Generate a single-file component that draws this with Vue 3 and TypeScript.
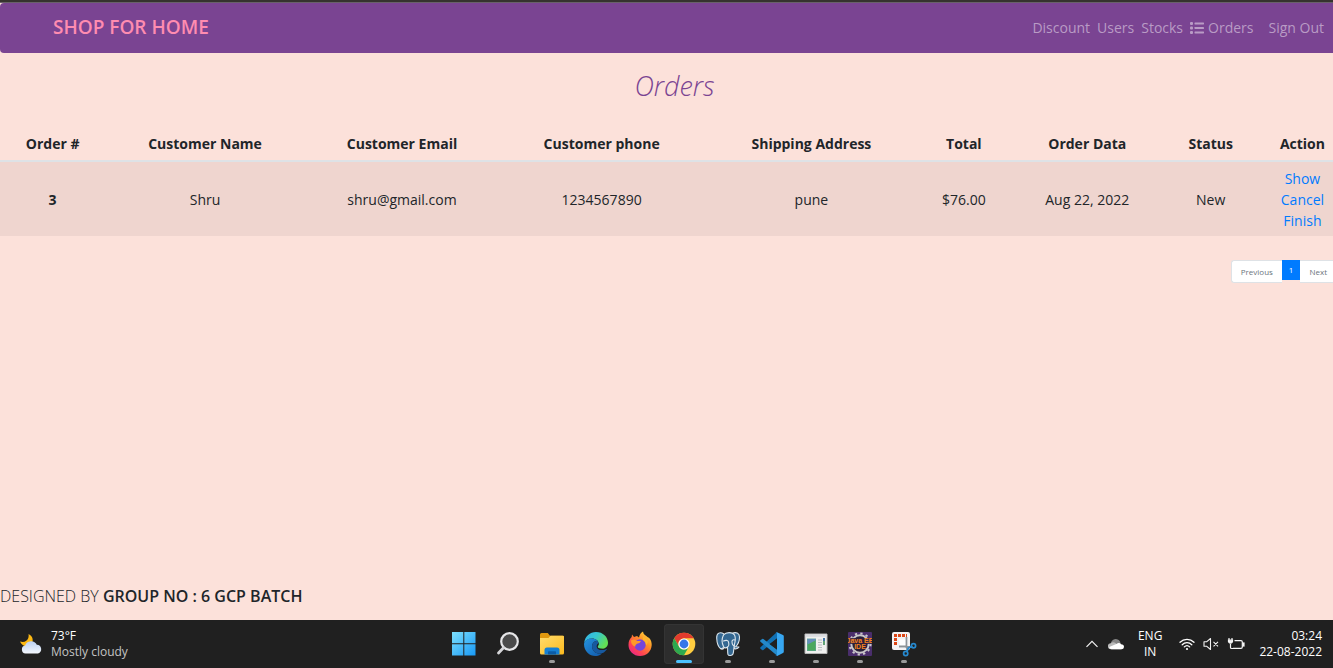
<script setup lang="ts">
interface Order {
  id: number
  name: string
  email: string
  phone: string
  address: string
  total: string
  date: string
  status: string
}

const headings: string[] = [
  'Order #',
  'Customer Name',
  'Customer Email',
  'Customer phone',
  'Shipping Address',
  'Total',
  'Order Data',
  'Status',
  'Action',
]

const actions: string[] = ['Show', 'Cancel', 'Finish']

const orders: Order[] = [
  {
    id: 3,
    name: 'Shru',
    email: 'shru@gmail.com',
    phone: '1234567890',
    address: 'pune',
    total: '$76.00',
    date: 'Aug 22, 2022',
    status: 'New',
  },
]
</script>

<template>
  <div class="screen">
    <div class="browser-edge"></div>
    <div class="page">
      <div class="wide">
        <nav class="navbar">
          <a class="brand" href="#">SHOP FOR HOME</a>
          <div class="links">
            <a href="#">Discount</a>
            <a href="#">Users</a>
            <a href="#">Stocks</a>
            <a href="#" class="with-icon">
              <svg width="14" height="12" viewBox="0 0 14 12" fill="currentColor" aria-hidden="true">
                <rect x="0" y="0" width="3" height="3" rx="1" />
                <rect x="0" y="4.5" width="3" height="3" rx="1" />
                <rect x="0" y="9" width="3" height="3" rx="1" />
                <rect x="4.5" y="0.5" width="9.5" height="2" rx=".4" />
                <rect x="4.5" y="5" width="9.5" height="2" rx=".4" />
                <rect x="4.5" y="9.5" width="9.5" height="2" rx=".4" />
              </svg>
              Orders
            </a>
            <a href="#" class="sign-out">Sign Out</a>
          </div>
        </nav>
      </div>

      <div class="wide">
        <h1 class="title">Orders</h1>
        <table class="orders">
          <colgroup>
            <col class="c-id" />
            <col class="c-name" />
            <col class="c-email" />
            <col class="c-phone" />
            <col class="c-address" />
            <col class="c-total" />
            <col class="c-date" />
            <col class="c-status" />
            <col class="c-action" />
          </colgroup>
          <thead>
            <tr>
              <th v-for="heading in headings" :key="heading" scope="col">{{ heading }}</th>
            </tr>
          </thead>
          <tbody>
            <tr v-for="order in orders" :key="order.id">
              <th scope="row">{{ order.id }}</th>
              <td>{{ order.name }}</td>
              <td>{{ order.email }}</td>
              <td>{{ order.phone }}</td>
              <td>{{ order.address }}</td>
              <td>{{ order.total }}</td>
              <td>{{ order.date }}</td>
              <td>{{ order.status }}</td>
              <td>
                <a v-for="action in actions" :key="action" class="action" href="#">{{ action }}</a>
              </td>
            </tr>
          </tbody>
        </table>

        <div class="pagination">
          <button type="button" class="step first">Previous</button>
          <button type="button" class="current">1</button>
          <button type="button" class="step last">Next</button>
        </div>
      </div>

      <footer class="credit">DESIGNED BY <b>GROUP NO : 6 GCP BATCH</b></footer>
    </div>

    <div class="taskbar">
      <button type="button" class="weather">
        <svg width="24" height="22" viewBox="0 0 24 22" aria-hidden="true">
          <defs>
            <linearGradient id="cloud" x1="0" y1="0" x2="0" y2="1">
              <stop offset="0" stop-color="#b9cff2" />
              <stop offset="1" stop-color="#f3f7fd" />
            </linearGradient>
          </defs>
          <path d="M9.500 1c4.500 2 5.500 7 2.500 10.500C8.500 14.500 3 13.500 1 8.500c4 1.300 7.500-.500 8.300-3.500.4-1.500.5-2.500.2-4z" fill="#fcb813" />
          <path d="M6.500 20.500a4 4 0 0 1-.4-7.900A6.300 6.300 0 0 1 17.800 11.700a4.500 4.500 0 0 1 1.200 8.800z" fill="url(#cloud)" />
        </svg>
        <span class="weather-text">
          <span class="bright">73°F</span>
          <span class="dim">Mostly cloudy</span>
        </span>
      </button>

      <div class="apps">
        <button type="button" class="app" aria-label="Start">
          <svg width="24" height="24" viewBox="0 0 24 24">
            <defs>
              <linearGradient id="win" x1="0" y1="0" x2="1" y2="1">
                <stop offset="0" stop-color="#7de0fd" />
                <stop offset="1" stop-color="#1798f5" />
              </linearGradient>
            </defs>
            <path d="M0 0h11.300v11.300H0zM12.300 0H23.500v11.300H12.300zM0 12.300h11.300v11.200H0zM12.300 12.300h11.200v11.200H12.300z" fill="url(#win)" />
          </svg>
        </button>
        <button type="button" class="app" aria-label="Search">
          <svg width="24" height="24" viewBox="0 0 24 24">
            <circle cx="13.500" cy="9.500" r="8.300" fill="#4b4b4b" stroke="#e7e7e9" stroke-width="2.200" />
            <path d="M7.500 15.800 2.500 21" stroke="#d5d5d8" stroke-width="2.800" stroke-linecap="round" />
          </svg>
        </button>
        <button type="button" class="app running" aria-label="File Explorer">
          <svg width="26" height="24" viewBox="0 0 26 24">
            <defs>
              <linearGradient id="folder" x1="0" y1="0" x2="1" y2="1">
                <stop offset="0" stop-color="#ffdc6e" />
                <stop offset="1" stop-color="#fcba1d" />
              </linearGradient>
            </defs>
            <path d="M1 2.500Q1 1 2.500 1h6.300l2.200 2.700H23.500Q25 3.700 25 5v5H1z" fill="#e0980e" />
            <path d="M1 6h8.500l2-2.200H24q1 0 1 1V21q0 1.500-1.500 1.500h-21Q1 22.500 1 21z" fill="url(#folder)" />
            <path d="M5.500 22.500V18q0-2.500 2.500-2.500h10q2.500 0 2.500 2.500v4.500z" fill="#1580d4" />
            <path d="M9 20q0-.8.800-.8h6.400q.8 0 .8.800v2.500H9z" fill="#0b5ca7" />
          </svg>
        </button>
        <button type="button" class="app" aria-label="Edge">
          <svg width="26" height="26" viewBox="0 0 26 26">
            <defs>
              <linearGradient id="edge-a" x1="0" y1="0" x2="1" y2=".5">
                <stop offset="0" stop-color="#35b2ed" />
                <stop offset=".5" stop-color="#36c6cf" />
                <stop offset="1" stop-color="#63df54" />
              </linearGradient>
              <linearGradient id="edge-b" x1="0" y1="0" x2="1" y2="1">
                <stop offset="0" stop-color="#2493df" />
                <stop offset="1" stop-color="#1258a9" />
              </linearGradient>
            </defs>
            <path d="M1.200 12C2 5 7 1 13 1c7 0 12 5 12 10.800 0 4-3 6-6.300 6-2.700 0-4.200-.9-4.200-1.800 0-.7 1.200-1.200 1.200-3.200 0-3-2.900-5.300-6.700-5.300-3.600 0-6.500 1.700-7.800 4.500z" fill="url(#edge-a)" />
            <path d="M1 13C1.500 9.500 5 7.500 8.600 7.500c2.400 0 4.500.9 5.800 2.300-3.200.2-5.300 2.500-5.300 5.800 0 4.700 4.500 8.200 9.800 6.800C12.500 28.500 1 23.500 1 13z" fill="url(#edge-b)" />
            <path d="M14.400 9.800c-3.200.2-5.300 2.500-5.300 5.800 0 5 5 8.500 10.500 6.500 1.700-.7 3.200-1.900 4.100-3.500.3-.6-.1-.9-.6-.6-4.300 2.200-9.300.8-9.300-2.500 0-1.300.8-1.600 1.300-2.500.5-1.100.2-2.300-.7-3.200z" fill="#17599f" />
            <path d="M14.500 15.500c0-.6 1.200-1.200 1.200-3.200 0 0-2 .5-2 2.800 0 3.800 5.200 5.200 9.400 2.900 0 0-1.800.2-4.400-.2-2.600-.4-4.200-1.200-4.200-2.300z" fill="#202020" />
          </svg>
        </button>
        <button type="button" class="app" aria-label="Firefox">
          <svg width="26" height="26" viewBox="0 0 26 26">
            <defs>
              <linearGradient id="fox" x1="1" y1="0" x2=".2" y2="1">
                <stop offset="0" stop-color="#fff04a" />
                <stop offset=".4" stop-color="#ff9526" />
                <stop offset=".75" stop-color="#ff4352" />
                <stop offset="1" stop-color="#e6248c" />
              </linearGradient>
            </defs>
            <path d="M1.500 14c0-4 1.200-6 3.200-8L5 3.500 7 6l3-1 2 1.500c.5-3 2-5 4-6 .3 3 2.500 3.800 4.500 5.500l1.700 1C24 9 24.800 11.500 24.700 14 24.400 20.500 19.500 25 13 25S1.500 20 1.500 14z" fill="url(#fox)" />
            <circle cx="13" cy="14" r="5.700" fill="#7546dc" />
            <path d="M4 9.500q3-2 6 .5h4q-1 2.500-4 2.800-2 1-1.800 3Q4 14 4 9.500z" fill="#ff9a28" />
            <path d="M16 9q3 1.500 3 5.500l2-3q0-4-5-6z" fill="#ffb52c" />
          </svg>
        </button>
        <button type="button" class="app running active" aria-label="Chrome">
          <svg width="24" height="24" viewBox="0 0 24 24">
            <circle cx="12" cy="12" r="11.300" fill="#ffcd40" />
            <path d="M2.200 6.350A11.300 11.300 0 0 1 21.800 6.350H12a5.700 5.700 0 0 0-4.900 8.500z" fill="#e33b2e" />
            <path d="M2.200 6.350A11.300 11.300 0 0 0 12 23.300l4.900-8.500a5.700 5.700 0 0 1-9.800 0z" fill="#2da94f" />
            <circle cx="12" cy="12" r="5.600" fill="#fff" />
            <circle cx="12" cy="12" r="4.400" fill="#3577e8" />
          </svg>
        </button>
        <button type="button" class="app running" aria-label="pgAdmin">
          <svg width="26" height="26" viewBox="0 0 26 26" fill="#336791" stroke="#dce6ed" stroke-width="1.100" stroke-linejoin="round" stroke-linecap="round">
            <path d="M9 3C5 .3 1.500 2 1.700 7c.2 4 1.800 9 3.800 10.500 1.200.8 2.500-.5 3.500-2z" />
            <path d="M17 2.500c4-2 7.500-.2 7.500 3.500 0 4-2 8-4 9.800l3.500.2c-1 1.800-3 2-4.700 1.700z" />
            <path d="M8.500 4C11 .8 17.500.8 19.500 4c1.500 3 .8 6.500-.2 10-.5 2.500-.5 7-1.300 9-.8 2-4.500 2-5 .5-.6-2-.2-5.500-.5-7.500-1.500 1.500-3 1-4-.5C6.800 12 7 7 8.500 4z" />
            <path d="M12.500 16c2-1 1.500-3 1-5-.3-2-3-2-5-1M19.500 15c-2-.5-2.500-2-2.500-4.500 0-1.500 1.500-2 3-1.500M5.500 17.500q2.500 1.500 4-1" fill="none" />
          </svg>
        </button>
        <button type="button" class="app running" aria-label="Visual Studio Code">
          <svg width="26" height="26" viewBox="0 0 26 26">
            <path d="M18 1 1.500 16.200q-.7.800 0 1.500L3.200 19q.6.400 1.200-.1L18.500 7z" fill="#1070b3" />
            <path d="M1.400 9.300 3.200 8q.6-.4 1.200.1L18.500 19v6L1.500 10.800q-.7-.8-.1-1.500z" fill="#2489ca" />
            <path d="M18 1.200 24 4q.8.400.8 1.300v15.400q0 .9-.8 1.300l-6 3q-1 .2-1.700-.6 1.700 1.100 1.700-1V2.800Q18 .7 16.300 1.800q.8-.8 1.700-.6z" fill="#37a7f1" />
            <path d="M18 7.500V18.500L10.500 13z" fill="#202020" />
          </svg>
        </button>
        <button type="button" class="app running" aria-label="Task window">
          <svg width="24" height="22" viewBox="0 0 24 22">
            <path d="M1 1h22v19.500H1z" fill="#f1f1f0" stroke="#b6b6b6" />
            <path d="M1.500 1.500h21v2.300h-21z" fill="#dadde0" />
            <path d="M3 5.500h9v12.500H3z" fill="#68a8a0" />
            <path d="M3.500 17.500V10l8-3v10.500z" fill="#4ba85e" />
            <path d="M3.500 6h8v1.500l-8 4z" fill="#658fbb" />
            <path d="M14 7h4M14 9.500h4M14 12h4M14 14.500h4M14 17h4" stroke="#b9bdc1" />
            <path d="M20 5v7" stroke="#348b51" stroke-width="1.500" />
            <path d="M20 5v3" stroke="#3867ba" stroke-width="1.500" />
          </svg>
        </button>
        <button type="button" class="app running" aria-label="Java EE IDE">
          <svg width="24" height="24" viewBox="0 0 24 24">
            <rect width="24" height="24" rx="1" fill="#4a2e6c" />
            <circle cx="12" cy="12" r="8.700" fill="#28203a" stroke="#c9c7ca" stroke-width="2" />
            <circle cx="12" cy="12" r="10.600" fill="none" stroke="#c9c7ca" stroke-width="2" stroke-dasharray="2.300 3.250" />
            <rect y="6" width="24" height="6" fill="#30203c" opacity=".85" />
            <text x="12" y="11" text-anchor="middle" class="ide-text">Java EE</text>
            <text x="12" y="17" text-anchor="middle" class="ide-text">IDE</text>
          </svg>
        </button>
        <button type="button" class="app running" aria-label="Snipping Tool">
          <svg width="26" height="26" viewBox="0 0 26 26">
            <rect x="1" y="1" width="18" height="18" rx="2" fill="#f3f3f4" />
            <path d="M4.500 14V4.500H16" fill="none" stroke="#dc4717" stroke-width="3" stroke-dasharray="3 1" />
            <path d="M8 8.500h9V17H9z" fill="#fff" />
            <path d="M15.500 6v10l6 0M8 15.500h7.500l1 4" fill="none" stroke="#8c9398" stroke-width="1.800" />
            <circle cx="22.500" cy="14.800" r="2.100" fill="none" stroke="#2689cf" stroke-width="1.700" />
            <circle cx="14.700" cy="22.500" r="2.100" fill="none" stroke="#2689cf" stroke-width="1.700" />
            <path d="m20.500 15.500-3 1.500-1.800 3.500" fill="none" stroke="#2689cf" stroke-width="1.700" />
          </svg>
        </button>
      </div>

      <div class="tray">
        <button type="button" class="tray-button" aria-label="Show hidden icons">
          <svg width="14" height="8" viewBox="0 0 14 8" fill="none" stroke="#f2f2f2" stroke-width="1.200"><path d="m1.500 6.800 5.500-5.500 5.500 5.500" /></svg>
        </button>
        <button type="button" class="tray-button cloud" aria-label="OneDrive">
          <svg width="16" height="12" viewBox="0 0 16 12">
            <path d="M3.500 8.500a4.600 4.600 0 0 1 8.500-5l1.500 5z" fill="#868686" />
            <path d="M3 11.200a3 3 0 0 1-.3-6Q5 3.500 7.500 5l6 6.200z" fill="#bababa" />
            <path d="M3.500 11.200Q1 11 1.200 9L8.300 6q3-2 4.700.2 3 .1 3 2.700-.2 2.200-2.500 2.300z" fill="#fff" />
          </svg>
        </button>
        <button type="button" class="tray-button language"><span>ENG</span><span>IN</span></button>
        <button type="button" class="tray-button status" aria-label="Network, volume and battery">
          <svg width="16" height="14" viewBox="0 0 16 14" fill="none" stroke="#fff" stroke-width="1.300" stroke-linecap="round">
            <path d="M1 5.200a9.900 9.900 0 0 1 14 0M3.200 7.700a6.800 6.800 0 0 1 9.600 0M5.300 9.900a3.900 3.900 0 0 1 5.400 0" />
            <circle cx="8" cy="12" r="1.100" fill="#fff" stroke="none" />
          </svg>
          <svg width="16" height="14" viewBox="0 0 16 14" fill="none" stroke="#f1f1f1" stroke-width="1.100" stroke-linejoin="round">
            <path d="M1 4.800h2.500L7.500 1.500v11L3.500 9.200H1zM10.500 4.800l4.500 4.500M15 4.800l-4.500 4.500" />
          </svg>
          <svg width="18" height="14" viewBox="0 0 18 14" fill="none" stroke="#f5f5f5" stroke-width="1.200">
            <path d="M7.500 3.600H14q1.300 0 1.300 1.300v5.200q0 1.300-1.300 1.300H6" />
            <path d="M16 6h1v3h-1z" fill="#f5f5f5" />
            <path d="M1.500 3.200h4v1.600L4.500 6h-2L1.500 4.800z" fill="#f5f5f5" />
            <path d="M2 3V1M5 3V1M3.500 6.500v4q0 1 1 1H6" />
          </svg>
        </button>
        <button type="button" class="tray-button clock"><span>03:24</span><span>22-08-2022</span></button>
      </div>
    </div>
  </div>
</template>

<style>
body {
  margin: 0;
}
</style>

<style scoped>
.screen {
  display: flex;
  flex-direction: column;
  min-height: 100vh;
  overflow: hidden;
  background: #fce1da;
  color: #212529;
  font-family: "Segoe UI", "Open Sans", "Noto Sans", sans-serif;
  font-size: 14px;
}

a {
  text-decoration: none;
}

button {
  border: 0;
  padding: 0;
  background: none;
  color: inherit;
  font: inherit;
}

.browser-edge {
  height: 2px;
  background: #36332f;
  border-bottom: 1px solid #69616a;
}

.page {
  flex: 1;
  display: flex;
  flex-direction: column;
  overflow: hidden;
}

/* Rows run past the right side of the window by one gutter. */
.wide {
  margin-right: -16px;
}

.navbar {
  display: flex;
  align-items: center;
  justify-content: space-between;
  height: 50px;
  padding: 0 25px 0 53px;
  background: #7a4492;
  border-radius: 4px;
}

.brand {
  padding-bottom: 2px;
  color: #ff8cb0;
  font-size: 19px;
  font-weight: 600;
  line-height: 26px;
}

.links {
  display: flex;
  gap: 7px;
  line-height: 20px;
}

.links a {
  color: #b99bc5;
}

.with-icon {
  display: flex;
  align-items: center;
  gap: 4px;
}

.links .sign-out {
  margin-left: 8px;
}

.title {
  margin: 15px 0 25px;
  color: #7a4492;
  font-size: 27px;
  font-style: italic;
  font-weight: 300;
  line-height: 36px;
  text-align: center;
}

.orders {
  width: 100%;
  table-layout: fixed;
  border-collapse: separate;
  border-spacing: 0;
  line-height: 21px;
  text-align: center;
}

.c-id { width: 7.8%; }
.c-name { width: 14.8%; }
.c-email { width: 14.4%; }
.c-phone { width: 15.2%; }
.c-address { width: 15.9%; }
.c-total { width: 6.7%; }
.c-date { width: 11.6%; }
.c-status { width: 6.7%; }
.c-action { width: 6.9%; }

.orders th,
.orders td {
  padding: 6px 0 5px;
  font-weight: 400;
  white-space: nowrap;
}

.orders th {
  font-weight: 700;
}

.orders thead th {
  padding: 4px 0 6px;
  border-bottom: 2px solid #dee2e6;
}

.orders tbody tr {
  background: #efd5cf;
}

.action {
  display: block;
  color: #007bff;
}

.pagination {
  display: flex;
  align-items: flex-start;
  justify-content: flex-end;
  margin: 24px 12px 0 0;
  font-size: 8px;
  line-height: 12px;
}

.step {
  padding: 5px 9px 4px;
  border: 1px solid #dee2e6;
  background: #fff;
  color: #6c757d;
}

.first {
  border-right: 0;
  border-radius: 3px 0 0 3px;
}

.last {
  border-left: 0;
  border-radius: 0 3px 3px 0;
}

.current {
  padding: 4px 7px;
  background: #007bff;
  color: #fff;
}

.credit {
  margin-top: auto;
  padding-bottom: 12px;
  font-size: 16px;
  font-weight: 300;
  line-height: 24px;
}

.credit b {
  font-weight: 600;
}

.taskbar {
  display: grid;
  grid-template-columns: 444fr auto 409fr;
  align-items: center;
  height: 48px;
  background: #202020;
  color: #fff;
  font-size: 12px;
  line-height: 16px;
}

.weather {
  display: flex;
  align-items: center;
  gap: 8px;
  padding-left: 19px;
  text-align: left;
}

.weather-text {
  display: flex;
  flex-direction: column;
}

.dim {
  color: #c4c4c4;
}

.apps {
  display: flex;
  gap: 4px;
}

.app {
  position: relative;
  display: flex;
  align-items: center;
  justify-content: center;
  width: 40px;
  height: 40px;
  border-radius: 4px;
}

.active {
  background: #2d2d2d;
  box-shadow: inset 0 0 0 1px #343434;
}

.running::after {
  content: "";
  position: absolute;
  bottom: 1px;
  width: 6px;
  height: 3px;
  border-radius: 2px;
  background: #9a9a9a;
}

.active::after {
  width: 16px;
  background: #4cc2ff;
}

.ide-text {
  fill: #f58220;
  font-family: "Liberation Sans", sans-serif;
  font-size: 7px;
  font-weight: 700;
}

.tray {
  display: flex;
  align-items: center;
  justify-content: flex-end;
  padding-right: 11px;
}

.tray-button {
  display: flex;
  align-items: center;
}

.cloud {
  margin-left: 9px;
}

.language {
  flex-direction: column;
  margin-left: 14px;
}

.status {
  gap: 8px;
  margin-left: 17px;
}

.clock {
  flex-direction: column;
  align-items: flex-end;
  margin-left: 14px;
}
</style>
